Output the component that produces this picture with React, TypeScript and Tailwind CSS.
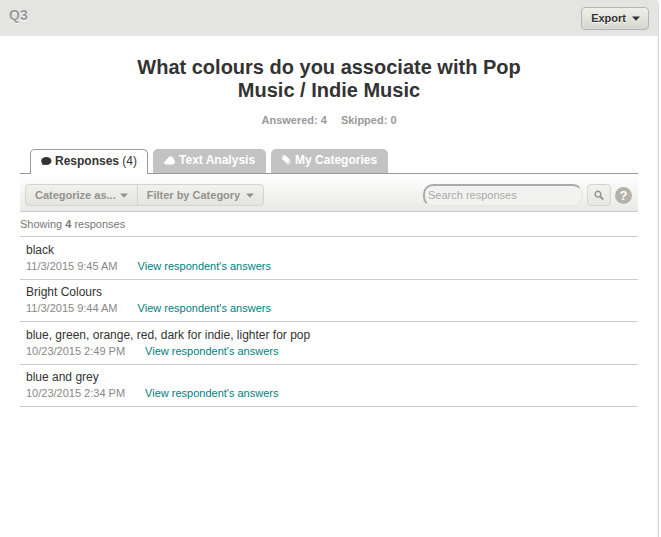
import { useState } from 'react';

interface SurveyResponse {
  id: number;
  text: string;
  date: string;
}

const RESPONSES: SurveyResponse[] = [
  { id: 1, text: 'black', date: '11/3/2015 9:45 AM' },
  { id: 2, text: 'Bright Colours', date: '11/3/2015 9:44 AM' },
  { id: 3, text: 'blue, green, orange, red, dark for indie, lighter for pop', date: '10/23/2015 2:49 PM' },
  { id: 4, text: 'blue and grey', date: '10/23/2015 2:34 PM' },
];

function Caret() {
  return (
    <svg width="8" height="6" viewBox="0 0 8 6" fill="currentColor" aria-hidden="true">
      <path d="M0 1.500h8L4 5.800z" />
    </svg>
  );
}

function BubbleIcon() {
  return (
    <svg width="11" height="10" viewBox="0 0 11 10" fill="currentColor" aria-hidden="true">
      <ellipse cx="5.300" cy="5" rx="5.200" ry="4" />
      <path d="M1.500 6.500 1.300 9 4 8.500z" />
    </svg>
  );
}

function CloudIcon() {
  return (
    <svg width="11" height="10" viewBox="0 0 11 10" fill="currentColor" aria-hidden="true">
      <path d="M2 9.500C.9 9.500.2 8.700.2 7.700c0-1.100.7-1.800 1.700-2C1.900 4.700 2.500 4 3.500 3.900 4 2.300 5 1.300 6.600 1.300c1.800 0 2.900 1.300 3 3.100.9.500 1.300 1.500 1.300 2.600 0 1.500-.9 2.500-2.300 2.500z" />
    </svg>
  );
}

function TagsIcon() {
  return (
    <svg width="9" height="10" viewBox="0 0 9 10" fill="currentColor" aria-hidden="true">
      <path fillRule="evenodd" d="M.2.600h3.400L8 5 4.900 8.500.2 4.300zM1.700 1.400a.7.7 0 1 0 0 1.400.7.7 0 0 0 0-1.400z" />
      <path d="M8.300 5.600 8.900 6.300 5.900 9.900 4.900 9.400z" />
    </svg>
  );
}

function SearchIcon() {
  return (
    <svg width="10" height="10" viewBox="0 0 10 10" fill="none" stroke="currentColor" aria-hidden="true">
      <circle cx="4" cy="4.200" r="2.900" strokeWidth="1.400" />
      <path d="M6 6.300 9.300 9.500" strokeWidth="1.800" />
    </svg>
  );
}

const tabOff = 'flex h-6 items-center gap-1 rounded-t-[5px] bg-[#c3c3c3] px-[11px] pb-[2px] text-xs font-bold text-white';
const toolButton = 'flex h-[22px] items-center border border-[#d3d4ce] bg-linear-to-b from-[#f1f2ee] to-[#e4e5df] text-[11px] font-bold text-[#92928e]';

export default function App() {
  const [query, setQuery] = useState('');
  const visible = RESPONSES.filter(r => r.text.toLowerCase().includes(query.toLowerCase()));

  return (
    <div className="min-h-screen bg-white pr-[2px] font-['Liberation_Sans',Arial,sans-serif] text-[#333]">
      <div className="min-h-screen rounded-tr-[4px] border-r border-[#ddd] shadow-[inset_-1px_0_0_#f0f0f0]">
        <header className="flex h-9 items-center justify-between rounded-tr-[3px] bg-[#e4e4e2] px-[9px]">
          <h2 className="pb-[6px] text-sm font-bold text-[#999] [text-shadow:0_1px_0_#fff]">Q3</h2>
          <button className="flex h-[23px] items-center gap-[6px] rounded-[4px] border border-[#b5b5b5] bg-linear-to-b from-[#eeefea] to-[#d6d8cf] pr-2 pl-[9px] text-[11px] font-bold text-[#333] [text-shadow:0_1px_0_#fff]">
            Export <Caret />
          </button>
        </header>

        <main className="px-5 pt-5">
          <h1 className="mx-auto max-w-[420px] text-center text-xl leading-[23px] font-bold text-[#333]">
            What colours do you associate with Pop Music / Indie Music
          </h1>
          <div className="mt-[10px] flex justify-center gap-[14px] text-[11px] leading-4 font-bold text-[#999]">
            <span>Answered: 4</span>
            <span>Skipped: 0</span>
          </div>

          {/* Tabs */}
          <nav className="mt-[21px] flex items-start gap-[5px] pl-[10px]">
            <button className="-mb-px flex h-[25px] items-center gap-[3px] rounded-t-[5px] border border-b-0 border-[#999] bg-white px-[10px] pb-[2px] text-xs text-[#333]">
              <BubbleIcon />
              <span><b>Responses</b> (4)</span>
            </button>
            <button className={tabOff}><CloudIcon /> Text Analysis</button>
            <button className={tabOff}><TagsIcon /> My Categories</button>
          </nav>

          {/* Toolbar */}
          <div className="flex h-[39px] items-center justify-between border-t border-b border-t-[#999] border-b-[#ccc] bg-linear-to-b from-white to-[#e9e9e8] pr-[6px] pl-[5px]">
            <div className="flex pt-[5px]">
              <button className={`${toolButton} gap-1 rounded-l-[4px] px-[9px]`}>Categorize as... <Caret /></button>
              <button className={`${toolButton} -ml-px gap-[6px] rounded-r-[4px] px-[9px]`}>Filter by Category <Caret /></button>
            </div>
            <div className="flex items-center gap-1 pt-[5px]">
              <input
                type="text"
                aria-label="Search responses"
                placeholder="Search responses"
                value={query}
                onChange={e => setQuery(e.target.value)}
                className="h-[23px] w-40 rounded-[10px] border-2 border-t-[#aaa] border-r-[#e9e9e9] border-b-[#e9e9e9] border-l-[#aaa] bg-[#f2f2f1] px-[3px] text-[11px] outline-none placeholder:text-[#aaa]"
              />
              <button aria-label="Search" className="flex h-[22px] w-6 items-center justify-center rounded-[4px] border border-[#d3d4ce] bg-linear-to-b from-[#f1f2ee] to-[#e7e8e2] text-[#92928e]">
                <SearchIcon />
              </button>
              <button aria-label="Help" className="flex size-[17px] items-center justify-center rounded-full bg-[#b3b3aa] text-[13px] leading-none font-bold text-white">
                ?
              </button>
            </div>
          </div>

          <p className="border-b border-[#ccc] py-1 text-[11px] leading-4 text-[#777]">
            Showing <b>{visible.length}</b> responses
          </p>

          <ul>
            {visible.map(r => (
              <li key={r.id} className="border-b border-[#ccc] px-[6px] pt-1 pb-[5px] odd:pt-[5px]">
                <p className="text-xs leading-4">{r.text}</p>
                <div className="flex gap-5 text-[11px] leading-4 text-[#888]">
                  <span>{r.date}</span>
                  <a href="#respondent" className="text-[#008080]">View respondent's answers</a>
                </div>
              </li>
            ))}
          </ul>
        </main>
      </div>
    </div>
  );
}
